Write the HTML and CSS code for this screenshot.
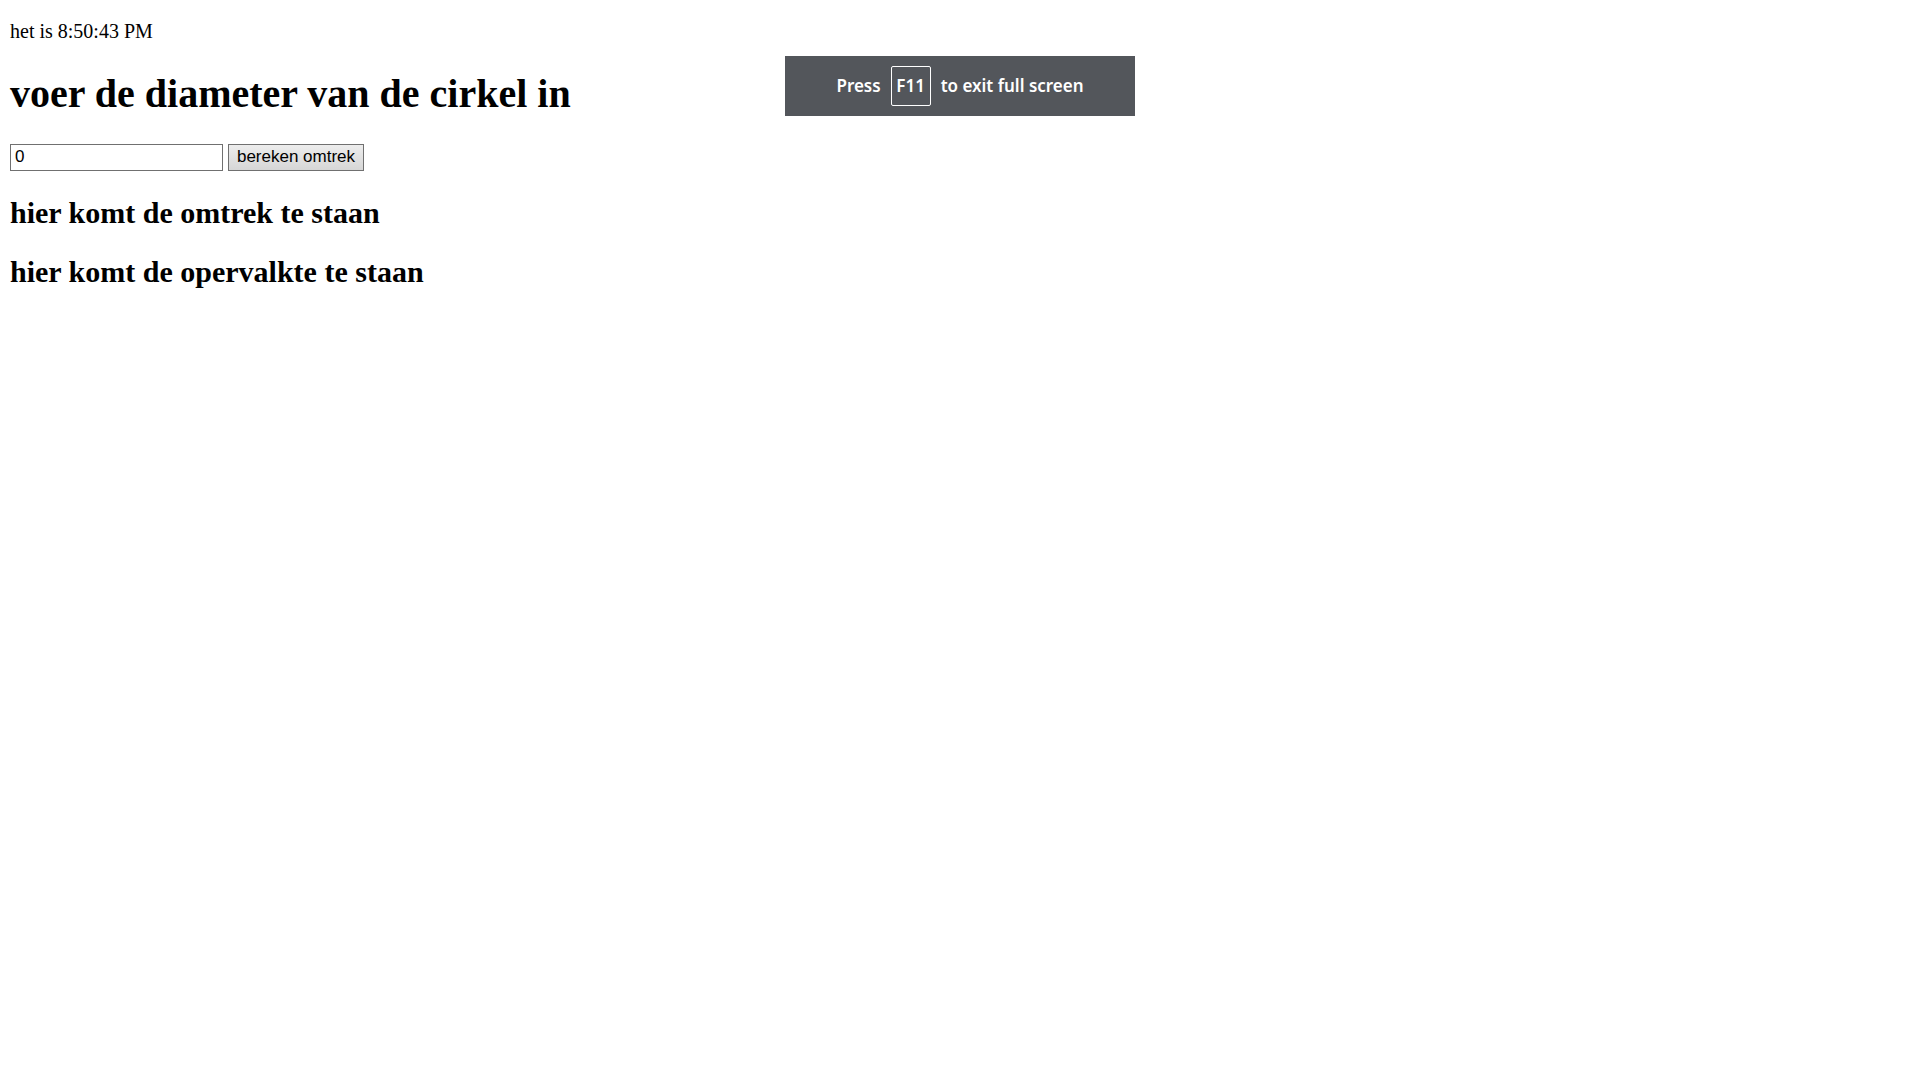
FILE: index.html
```html
<!DOCTYPE html>
<html lang="nl">
<head>
<meta charset="utf-8">
<title>Cirkel</title>
<link rel="stylesheet" href="styles.css">
</head>
<body>
<main class="page">
<p class="clock">het is 8:50:43 PM</p>
<h1 class="title"><label for="diameter">voer de diameter van de cirkel in</label></h1>
<form class="calc">
<input class="field" id="diameter" type="text" value="0">
<button class="calc-button" type="button">bereken omtrek</button>
</form>
<h2 class="result">hier komt de omtrek te staan</h2>
<h2 class="result">hier komt de opervalkte te staan</h2>
</main>
<div class="toast" role="status"><span>Press</span><kbd class="key">F11</kbd><span>to exit full screen</span></div>
</body>
</html>
```
FILE: styles.css
```css
body {
  margin: 0;
  background: #fff;
  color: #000;
  font-family: "Liberation Serif", "Times New Roman", serif;
}
.page {
  padding: 20px 10px;
}
.clock {
  margin: 0 0 27px;
  font-size: 20px;
  line-height: 23px;
}
.title {
  margin: 0 0 26px;
  font-size: 40px;
  line-height: 48px;
}
.calc {
  display: flex;
  gap: 5px;
  margin-bottom: 25px;
}
.field,
.calc-button {
  box-sizing: border-box;
  height: 27px;
  margin: 0;
  border: 1px solid #707070;
  border-radius: 0;
  font-family: "Liberation Sans", Arial, sans-serif;
  font-size: 17px;
  color: #000;
}
.field {
  width: 213px;
  padding: 0 4px 2px;
}
.calc-button {
  width: 136px;
  padding: 0 0 2px;
  background: linear-gradient(#ededed, #d6d6d6);
}
.result {
  margin: 0 0 25px;
  font-size: 30px;
  line-height: 34px;
}
.toast {
  position: absolute;
  top: 56px;
  left: 50%;
  transform: translateX(-50%);
  box-sizing: border-box;
  display: flex;
  align-items: center;
  justify-content: center;
  gap: 10px;
  width: 350px;
  height: 60px;
  background: #53565b;
  color: #fff;
  font-family: "Noto Sans", sans-serif;
  font-size: 17px;
  font-weight: 600;
  line-height: 38px;
  white-space: nowrap;
}
.key {
  box-sizing: border-box;
  width: 40px;
  border: 1px solid #fff;
  border-radius: 2px;
  font: inherit;
  text-align: center;
}
```
